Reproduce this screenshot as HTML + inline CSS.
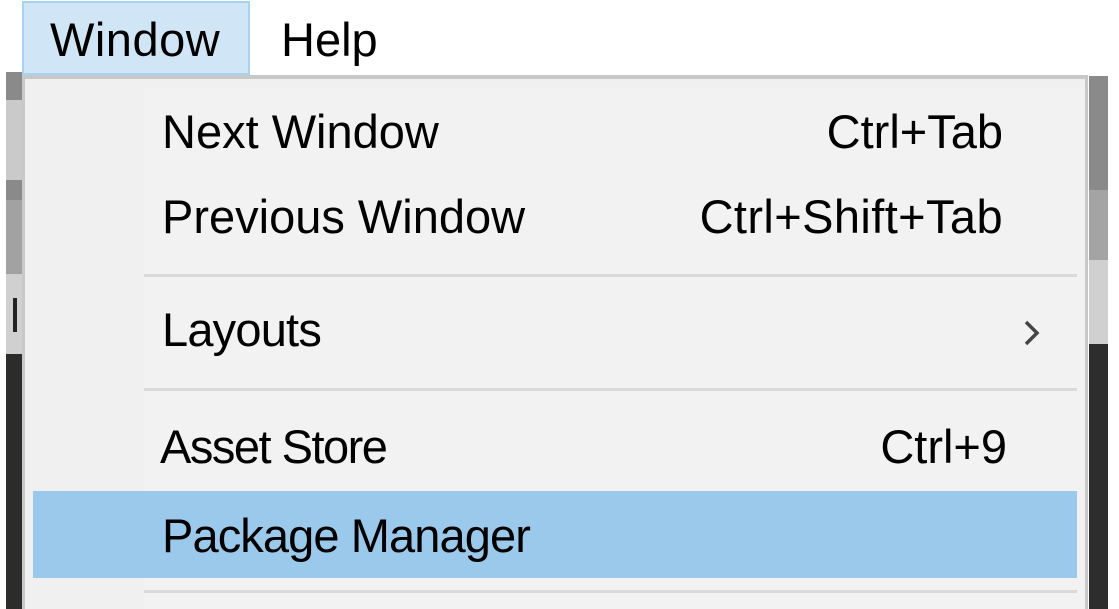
<!DOCTYPE html>
<html><head><style>
html,body{margin:0;padding:0;width:1119px;height:609px;overflow:hidden;background:#fff;position:relative;font-family:"Liberation Sans",sans-serif;color:#000}
div{position:absolute}
.t{font-size:47px;line-height:47px;white-space:nowrap}
.r{text-align:right;width:400px}
.sep{left:144px;width:933px;height:3px;background:#d8dadb}
</style></head><body>
<div style="left:22px;top:1px;width:224px;height:70px;background:#d0e6f6;border:2px solid #a8d2f2"></div>
<div class="t" style="left:50px;top:16px;letter-spacing:0.5px">Window</div>
<div class="t" style="left:281px;top:16px">Help</div>
<!-- left strip -->
<div style="left:6px;top:72px;width:16px;height:537px;background:#2c2c2a"></div>
<div style="left:6px;top:72px;width:16px;height:28px;background:#8a8a8a"></div>
<div style="left:6px;top:100px;width:16px;height:80px;background:#cacaca"></div>
<div style="left:6px;top:180px;width:16px;height:20px;background:#8a8a8a"></div>
<div style="left:6px;top:200px;width:16px;height:74px;background:#a2a2a2"></div>
<div style="left:6px;top:274px;width:16px;height:80px;background:#d0d0d0"></div>
<div style="left:13px;top:298px;width:4px;height:34px;background:#222"></div>
<!-- right strip -->
<div style="left:1089px;top:76px;width:19px;height:533px;background:#2d2d2d"></div>
<div style="left:1089px;top:76px;width:19px;height:114px;background:#8a8a8a"></div>
<div style="left:1089px;top:190px;width:19px;height:70px;background:#a4a4a4"></div>
<div style="left:1089px;top:260px;width:19px;height:84px;background:#d0d0d0"></div>
<!-- menu -->
<div style="left:22px;top:75px;width:1066px;height:534px;background:#c8c8c8"></div>
<div style="left:25px;top:79px;width:1060px;height:530px;background:#f0f0f0"></div>
<div style="left:144px;top:88px;width:941px;height:521px;background:#f2f2f2"></div>
<div class="sep" style="top:274px"></div>
<div class="sep" style="top:388px"></div>
<div class="sep" style="top:590px"></div>
<div style="left:33px;top:491px;width:1044px;height:87px;background:#9bc9eb"></div>
<div class="t" style="left:162px;top:108px">Next Window</div>
<div class="t r" style="left:603px;top:108px">Ctrl+Tab</div>
<div class="t" style="left:162px;top:193px">Previous Window</div>
<div class="t r" style="left:603px;top:193px;letter-spacing:0.4px">Ctrl+Shift+Tab</div>
<div class="t" style="left:162px;top:306px;letter-spacing:-0.8px">Layouts</div>
<svg style="position:absolute;left:1020px;top:318px" width="24" height="30"><path d="M6 4 L17 15 L6 26" fill="none" stroke="#444" stroke-width="3.5"/></svg>
<div class="t" style="left:160px;top:423px;letter-spacing:-1.5px">Asset Store</div>
<div class="t r" style="left:607px;top:423px">Ctrl+9</div>
<div class="t" style="left:162px;top:512px;letter-spacing:-0.9px">Package Manager</div>
</body></html>
